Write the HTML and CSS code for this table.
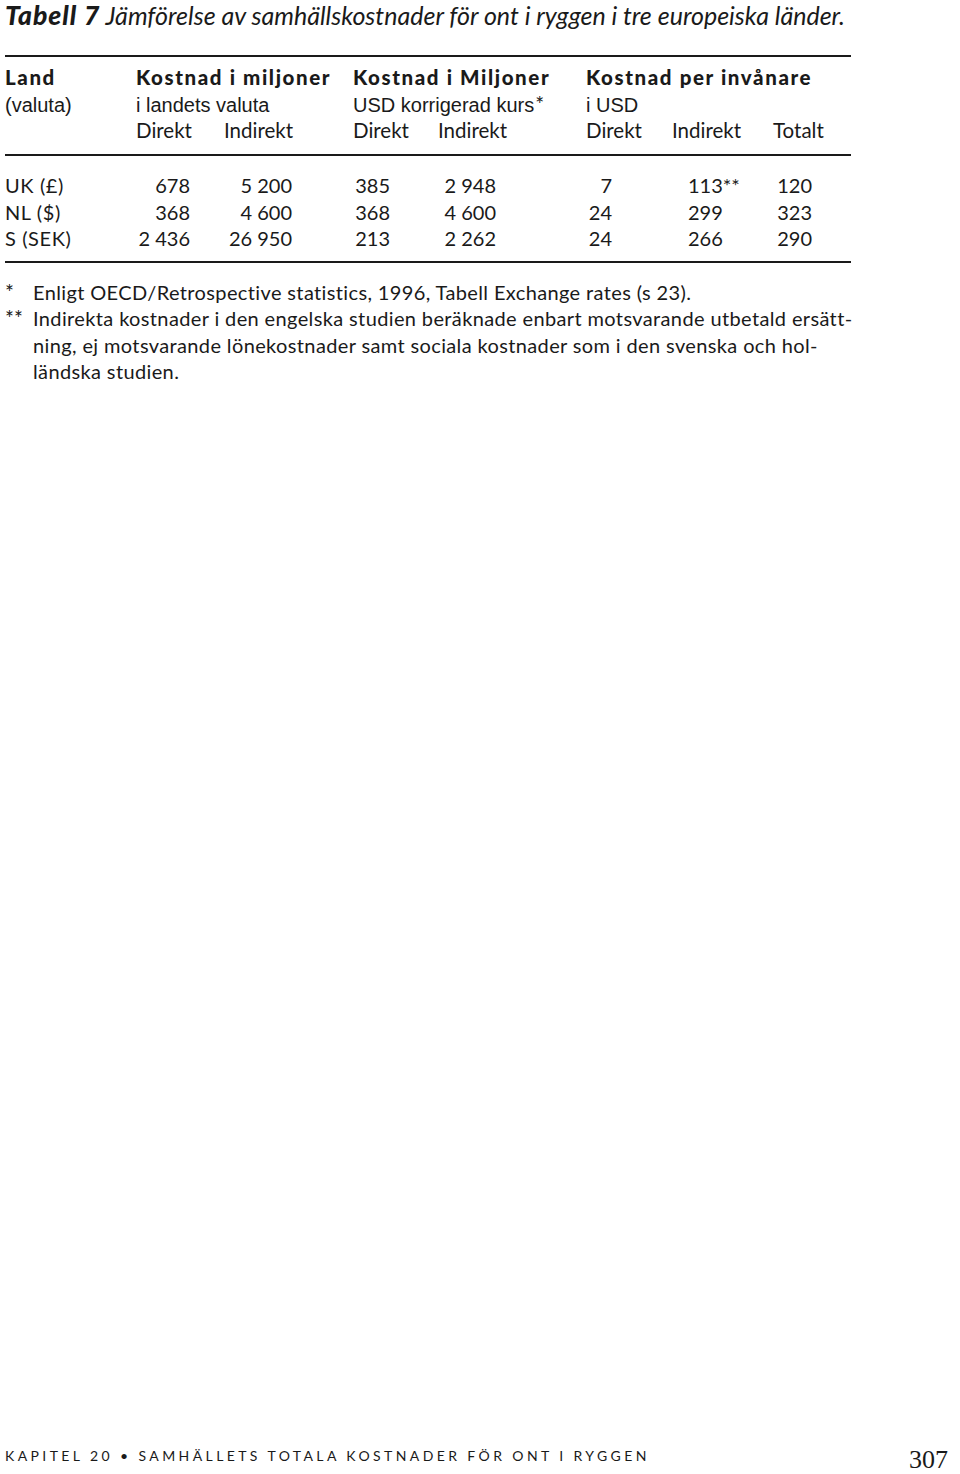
FILE: index.html
```html
<!DOCTYPE html>
<html lang="sv">
<head>
<meta charset="utf-8">
<title>Tabell 7</title>
<link rel="stylesheet" href="styles.css">
</head>
<body>
<div class="page">
  <h1 class="title"><b>Tabell 7</b> Jämförelse av samhällskostnader för ont i ryggen i tre europeiska länder.</h1>

  <div class="table">
    <div class="head">
      <div class="hb c1">Land</div>
      <div class="hb c2s">Kostnad i miljoner</div>
      <div class="hb c4s">Kostnad i Miljoner</div>
      <div class="hb c6s">Kostnad per invånare</div>

      <div class="hs c1">(valuta)</div>
      <div class="hs c2s">i landets valuta</div>
      <div class="hs c4s">USD korrigerad kurs<span class="hast">*</span></div>
      <div class="hs c6s">i USD</div>

      <div class="hg c1"></div>
      <div class="hg">Direkt</div>
      <div class="hg">Indirekt</div>
      <div class="hg">Direkt</div>
      <div class="hg">Indirekt</div>
      <div class="hg">Direkt</div>
      <div class="hg">Indirekt</div>
      <div class="hg">Totalt</div>
    </div>

    <div class="body">
      <div class="land">UK (£)</div>
      <div class="n n2">678</div>
      <div class="n n3">5 200</div>
      <div class="n n4">385</div>
      <div class="n n5">2 948</div>
      <div class="n n6">7</div>
      <div class="n n7">113<span class="ast">**</span></div>
      <div class="n n8">120</div>

      <div class="land">NL ($)</div>
      <div class="n n2">368</div>
      <div class="n n3">4 600</div>
      <div class="n n4">368</div>
      <div class="n n5">4 600</div>
      <div class="n n6">24</div>
      <div class="n n7">299</div>
      <div class="n n8">323</div>

      <div class="land">S (SEK)</div>
      <div class="n n2">2 436</div>
      <div class="n n3">26 950</div>
      <div class="n n4">213</div>
      <div class="n n5">2 262</div>
      <div class="n n6">24</div>
      <div class="n n7">266</div>
      <div class="n n8">290</div>
    </div>
  </div>

  <div class="notes">
    <div class="mark">*</div>
    <div class="note">Enligt OECD/Retrospective statistics, 1996, Tabell Exchange rates (s 23).</div>
    <div class="mark">**</div>
    <div class="note">Indirekta kostnader i den engelska studien beräknade enbart motsvarande utbetald ersätt-<br>ning, ej motsvarande lönekostnader samt sociala kostnader som i den svenska och hol-<br>ländska studien.</div>
  </div>

  <div class="footer">
    <div class="running">KAPITEL 20 • SAMHÄLLETS TOTALA KOSTNADER FÖR ONT I RYGGEN</div>
    <div class="folio">307</div>
  </div>
</div>
</body>
</html>
```

FILE: styles.css
```css
html, body {
  margin: 0;
  padding: 0;
  background: #ffffff;
}

.page {
  width: 960px;
  height: 1474px;
  box-sizing: border-box;
  padding-left: 5px;
  display: flex;
  flex-direction: column;
  color: #1a1a1a;
  font-family: Lato, "Open Sans", sans-serif;
}

.title {
  margin: 0;
  font-family: Lato, sans-serif;
  font-style: italic;
  font-weight: 400;
  font-size: 25px;
  line-height: 30px;
  height: 30px;
  white-space: nowrap;
}

.title b {
  font-weight: 900;
  font-size: 26.5px;
  letter-spacing: 1px;
}

.table {
  margin-top: 25px;
  width: 846px;
  border-top: 2px solid #1a1a1a;
  border-bottom: 2px solid #1a1a1a;
}

.head,
.body {
  display: grid;
  grid-template-columns: 131px 88px 129px 85px 148px 86px 101px 78px;
  grid-auto-rows: 26.5px;
  align-items: baseline;
}

.head {
  padding-top: 7px;
  padding-bottom: 10.5px;
  border-bottom: 2px solid #1a1a1a;
}

.c1 { grid-column: 1; }
.c2s { grid-column: 2 / span 2; }
.c4s { grid-column: 4 / span 2; }
.c6s { grid-column: 6 / span 3; }

.hb {
  font-family: Lato, sans-serif;
  font-weight: 900;
  font-size: 20.5px;
  letter-spacing: 1.6px;
  line-height: 26.5px;
  white-space: nowrap;
}

.hs {
  font-family: "Liberation Sans", Arial, sans-serif;
  font-size: 20px;
  line-height: 26.5px;
  white-space: nowrap;
}

.hast {
  font-family: Lato, sans-serif;
  font-size: 21px;
  margin-left: 1px;
}

.hg {
  font-size: 20.5px;
  line-height: 26.5px;
  white-space: nowrap;
}

.body {
  padding-top: 16px;
  padding-bottom: 9.5px;
}

.land,
.n {
  font-size: 20px;
  line-height: 26.5px;
  white-space: nowrap;
}

.land {
  letter-spacing: 0.6px;
}

.n { text-align: right; }
.n2 { padding-right: 34px; }
.n3 { padding-right: 61px; }
.n4 { padding-right: 48px; }
.n5 { padding-right: 90px; }
.n6 { padding-right: 60px; }
.n7 { text-align: left; padding-left: 16px; }
.n8 { padding-right: 39px; }

.ast {
  font-size: 20px;
}

.notes {
  margin-top: 16px;
  display: grid;
  grid-template-columns: 28px 1fr;
  font-size: 20px;
  letter-spacing: 0.37px;
  line-height: 26.3px;
}

.mark {
  font-size: 21px;
  letter-spacing: 0;
  white-space: nowrap;
}

.note {
  white-space: nowrap;
}

.footer {
  margin-top: auto;
  display: flex;
  justify-content: space-between;
  align-items: flex-end;
  padding-right: 12px;
  padding-bottom: 1px;
}

.running {
  font-size: 14px;
  line-height: 14px;
  letter-spacing: 3.4px;
  margin-bottom: 10px;
  white-space: nowrap;
}

.folio {
  font-family: "Liberation Serif", serif;
  font-size: 26px;
  line-height: 26px;
}
```
